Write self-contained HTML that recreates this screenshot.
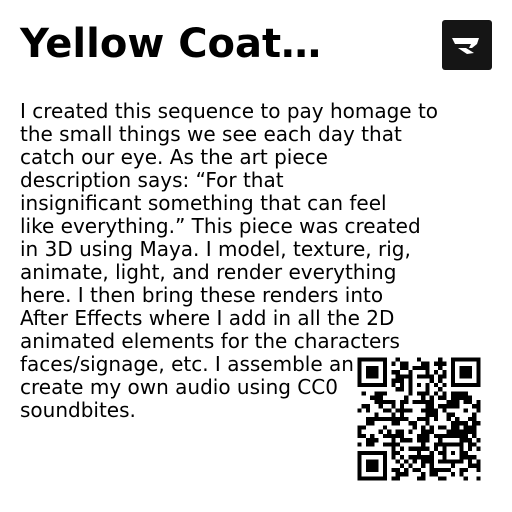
<!DOCTYPE html>
<html><head><meta charset="utf-8"><style>
html,body{margin:0;padding:0;background:#fff;width:512px;height:512px;overflow:hidden;position:relative}
h1{position:absolute;left:20px;top:19px;margin:0;font:bold 40px/50px "DejaVu Sans",sans-serif;color:#000;white-space:nowrap}
.logo{position:absolute;left:442px;top:20px;width:50px;height:50px;background:#151515;border-radius:3px}
p{position:absolute;left:20px;top:100px;width:480px;margin:0;font:20px/23px "DejaVu Sans",sans-serif;color:#000;white-space:nowrap}
.qr{position:absolute;left:353px;top:353px;width:132px;height:132px;background:#fff}
</style></head><body>
<h1>Yellow Coat…</h1>
<div class="logo"><svg width="50" height="50" viewBox="0 0 50 50"><path d="M10 18 H37 L35 24 L30 28 H24 L32 33 L25 34 L16 28 H27 L29 24 H13 Z" fill="#fff"/></svg></div>
<p>I created this sequence to pay homage to<br>the small things we see each day that<br>catch our eye. As the art piece<br>description says: “For that<br>insignificant something that can feel<br>like everything.” This piece was created<br>in 3D using Maya. I model, texture, rig,<br>animate, light, and render everything<br>here. I then bring these renders into<br>After Effects where I add in all the 2D<br>animated elements for the characters<br>faces/signage, etc. I assemble and<br>create my own audio using CC0<br>soundbites.</p>
<div class="qr"><svg id="q" width="132" height="132" viewBox="-1 -1 31 31" shape-rendering="crispEdges"></svg></div>
<script>
var s=document.getElementById('q'),n=29,out='';
var seed=12345;function r(){seed=(seed*1103515245+12345)&0x7fffffff;return seed/0x7fffffff;}
function fin(x,y){return '<rect x="'+x+'" y="'+y+'" width="7" height="7"/><rect x="'+(x+1)+'" y="'+(y+1)+'" width="5" height="5" fill="#fff"/><rect x="'+(x+2)+'" y="'+(y+2)+'" width="3" height="3"/>';}
for(var y=0;y<n;y++)for(var x=0;x<n;x++){
var inF=(x<8&&y<8)||(x>n-9&&y<8)||(x<8&&y>n-9);
if(inF)continue;
var on=(y==6||x==6)?((x+y)%2==0):r()<0.5;
if(x>=20&&x<=24&&y>=20&&y<=24){on=(x==20||x==24||y==20||y==24||(x==22&&y==22));}
if(on)out+='<rect x="'+x+'" y="'+y+'" width="1" height="1"/>';}
out+=fin(0,0)+fin(n-7,0)+fin(0,n-7);
s.innerHTML=out;
</script>
</body></html>
